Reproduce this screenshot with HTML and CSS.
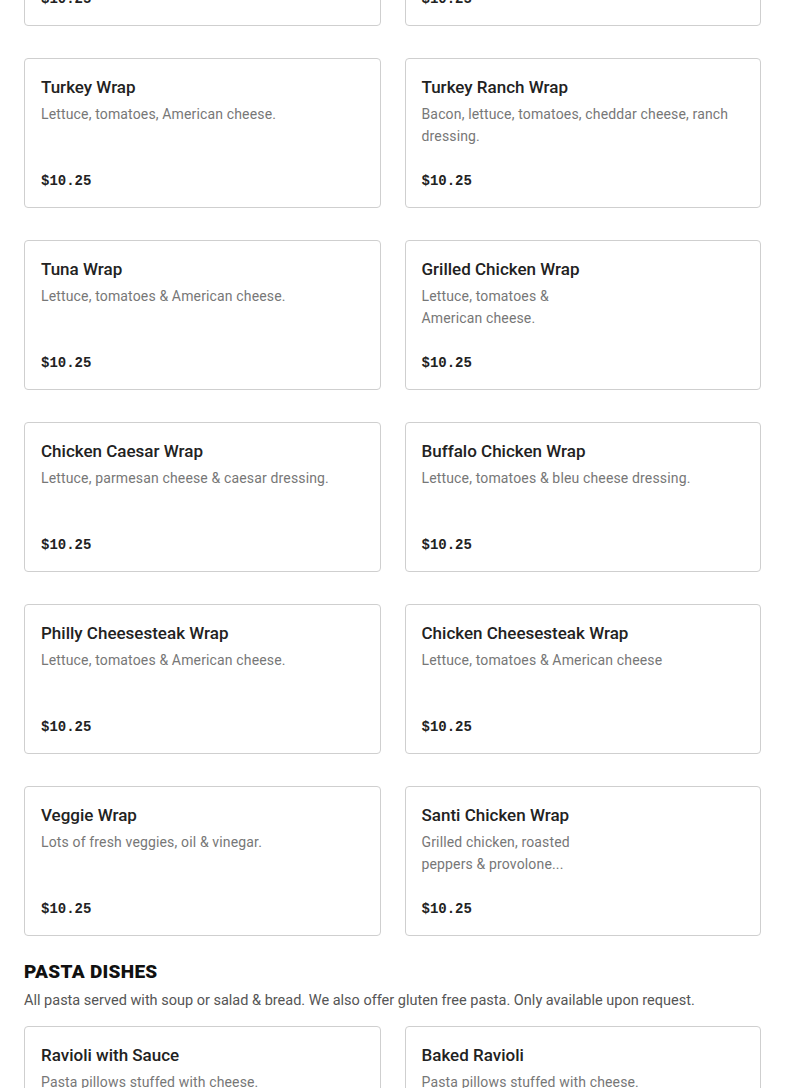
FILE: index.html
```html
<!DOCTYPE html>
<html lang="en">
<head>
    <meta charset="UTF-8">
    <meta name="viewport" content="width=device-width, initial-scale=1.0">
    <title>Menu</title>
    <link rel="stylesheet" href="styles.css">
</head>
<body>
    <div class="menu">
        <!-- Wraps (continued) -->
        <section class="section section-wraps">
            <div class="items">
                <div class="item">
                    <h3 class="item-name">Chicken Wrap</h3>
                    <p class="item-desc">Lettuce, tomatoes &amp; American cheese.</p>
                    <span class="item-price">$10.25</span>
                </div>
                <div class="item">
                    <h3 class="item-name">Ham Wrap</h3>
                    <p class="item-desc">Lettuce, tomatoes &amp; American cheese.</p>
                    <span class="item-price">$10.25</span>
                </div>
                <div class="item">
                    <h3 class="item-name">Turkey Wrap</h3>
                    <p class="item-desc">Lettuce, tomatoes, American cheese.</p>
                    <span class="item-price">$10.25</span>
                </div>
                <div class="item">
                    <h3 class="item-name">Turkey Ranch Wrap</h3>
                    <p class="item-desc">Bacon, lettuce, tomatoes, cheddar cheese, ranch dressing.</p>
                    <span class="item-price">$10.25</span>
                </div>
                <div class="item">
                    <h3 class="item-name">Tuna Wrap</h3>
                    <p class="item-desc">Lettuce, tomatoes &amp; American cheese.</p>
                    <span class="item-price">$10.25</span>
                </div>
                <div class="item">
                    <h3 class="item-name">Grilled Chicken Wrap</h3>
                    <p class="item-desc">Lettuce, tomatoes &amp;<br>American cheese.</p>
                    <span class="item-price">$10.25</span>
                </div>
                <div class="item">
                    <h3 class="item-name">Chicken Caesar Wrap</h3>
                    <p class="item-desc">Lettuce, parmesan cheese &amp; caesar dressing.</p>
                    <span class="item-price">$10.25</span>
                </div>
                <div class="item">
                    <h3 class="item-name">Buffalo Chicken Wrap</h3>
                    <p class="item-desc">Lettuce, tomatoes &amp; bleu cheese dressing.</p>
                    <span class="item-price">$10.25</span>
                </div>
                <div class="item">
                    <h3 class="item-name">Philly Cheesesteak Wrap</h3>
                    <p class="item-desc">Lettuce, tomatoes &amp; American cheese.</p>
                    <span class="item-price">$10.25</span>
                </div>
                <div class="item">
                    <h3 class="item-name">Chicken Cheesesteak Wrap</h3>
                    <p class="item-desc">Lettuce, tomatoes &amp; American cheese</p>
                    <span class="item-price">$10.25</span>
                </div>
                <div class="item">
                    <h3 class="item-name">Veggie Wrap</h3>
                    <p class="item-desc">Lots of fresh veggies, oil &amp; vinegar.</p>
                    <span class="item-price">$10.25</span>
                </div>
                <div class="item">
                    <h3 class="item-name">Santi Chicken Wrap</h3>
                    <p class="item-desc">Grilled chicken, roasted<br>peppers &amp; provolone...</p>
                    <span class="item-price">$10.25</span>
                </div>
            </div>
        </section>

        <!-- Pasta -->
        <section class="section">
            <h2 class="section-title">Pasta Dishes</h2>
            <p class="section-note">All pasta served with soup or salad &amp; bread. We also offer gluten free pasta. Only available upon request.</p>
            <div class="items">
                <div class="item">
                    <h3 class="item-name">Ravioli with Sauce</h3>
                    <p class="item-desc">Pasta pillows stuffed with cheese.</p>
                    <span class="item-price">$13.95</span>
                </div>
                <div class="item">
                    <h3 class="item-name">Baked Ravioli</h3>
                    <p class="item-desc">Pasta pillows stuffed with cheese.</p>
                    <span class="item-price">$14.95</span>
                </div>
            </div>
        </section>
    </div>
</body>
</html>
```

FILE: styles.css
```css
body {
    margin: 0;
    font-family: Roboto, "Liberation Sans", Arial, sans-serif;
    color: #222;
    background: #fff;
}
.menu {
    padding: 0 24px 40px;
    margin-top: -124px;
}
.section {
    margin-bottom: 24px;
}
.section-title {
    margin: 0;
    font-size: 19px;
    line-height: 24px;
    font-weight: 900;
    letter-spacing: 0.3px;
    text-transform: uppercase;
    color: #111;
}
.section-note {
    margin: 6px 0 14px;
    font-size: 14.5px;
    line-height: 22px;
    color: #555;
}
.items {
    display: grid;
    grid-template-columns: 1fr 1fr;
    gap: 32px 24px;
}
.item {
    display: flex;
    flex-direction: column;
    height: 150px;
    box-sizing: border-box;
    padding: 16px 16px 15px;
    border: 1px solid #cfcfcf;
    border-radius: 4px;
}
.item-name {
    margin: 0;
    font-size: 17px;
    line-height: 24px;
    font-weight: 500;
    color: #222;
}
.item-desc {
    margin: 4px 0 0;
    font-size: 14px;
    line-height: 22px;
    letter-spacing: 0.15px;
    color: #777;
}
.item-price {
    margin-top: auto;
    font-family: "Liberation Mono", "DejaVu Sans Mono", monospace;
    font-size: 14px;
    line-height: 22px;
    font-weight: 700;
    color: #222;
}
```
